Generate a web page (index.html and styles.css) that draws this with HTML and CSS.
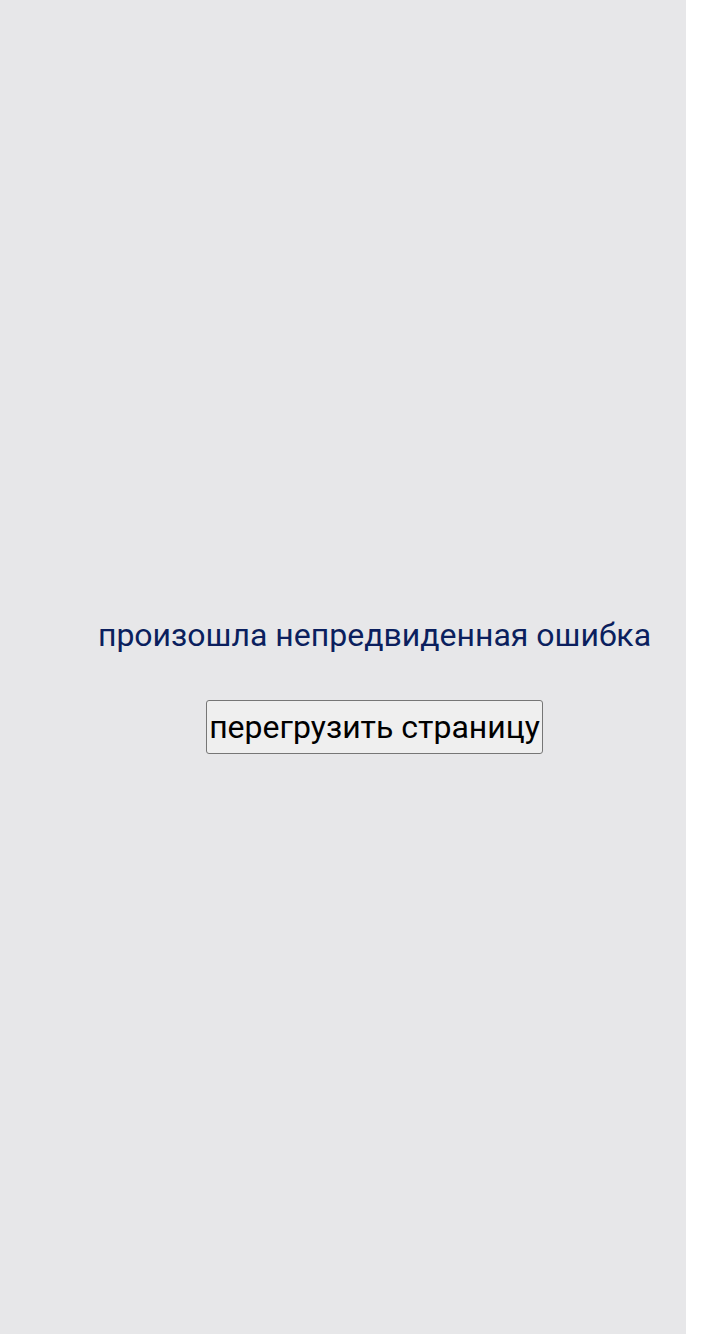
FILE: index.html
```html
<!DOCTYPE html>
<html lang="ru">
<head>
<meta charset="utf-8">
<link rel="stylesheet" href="styles.css">
</head>
<body>
<div class="screen">
  <div class="error">
    <p class="message">произошла непредвиденная ошибка</p>
    <button class="reload" type="button">перегрузить страницу</button>
  </div>
</div>
</body>
</html>
```

FILE: styles.css
```css
html, body {
  margin: 0;
  padding: 0;
  background: #ffffff;
}
.screen {
  width: 686px;
  height: 1334px;
  background: #e7e7e9;
  box-sizing: border-box;
  padding-left: 63px;
  padding-top: 615px;
  display: flex;
  flex-direction: column;
  align-items: center;
}
.error {
  display: flex;
  flex-direction: column;
  align-items: center;
  font-family: Roboto, "Noto Sans", sans-serif;
}
.message {
  margin: 0;
  font-size: 32px;
  line-height: 40px;
  color: #0b1f5e;
}
.reload {
  margin-top: 45px;
  font-family: Roboto, "Noto Sans", sans-serif;
  font-size: 32px;
  line-height: 38px;
  color: #000;
  background: #efefef;
  border: 1px solid #767676;
  border-radius: 3px;
  padding: 7px 2px;
}
```
